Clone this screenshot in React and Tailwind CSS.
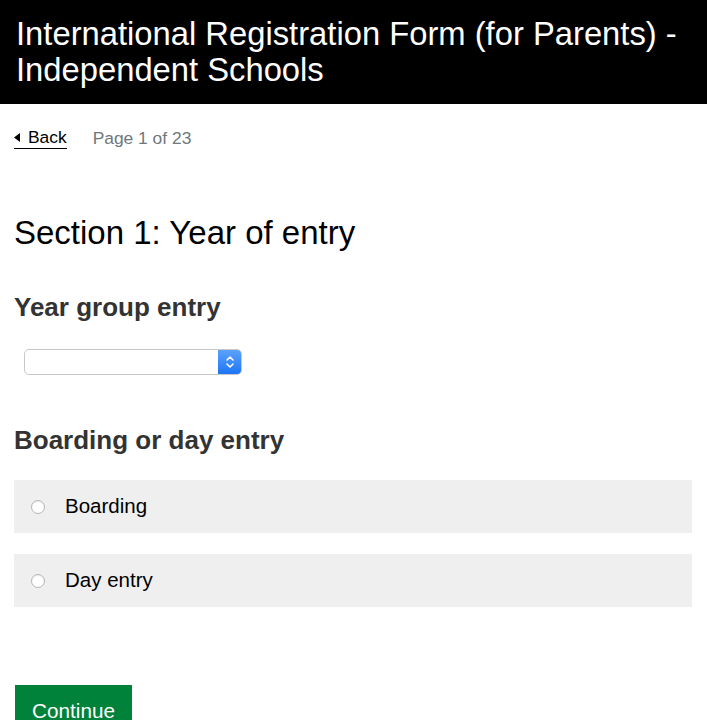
import React from "react";

function Option({ label }) {
  return (
    <label className="flex items-center h-[53px] bg-[#efefef] pl-[17px]">
      <span className="w-[14px] h-[14px] rounded-full border border-[#b5b5b5] bg-white shadow-[inset_0_1px_1px_rgba(0,0,0,0.08)]" />
      <span className="ml-[20px] text-[20.5px] text-black">{label}</span>
    </label>
  );
}

export default function App() {
  return (
    <div className="min-h-screen bg-white font-['Liberation_Sans',Arial,sans-serif]">
      <div className="bg-black text-white px-[16px] pt-[16px] h-[104px]">
        <h1 className="text-[32.75px] leading-[36px]">
          International Registration Form (for Parents) - Independent Schools
        </h1>
      </div>

      <div className="px-[14px]">
        <div className="flex items-center mt-[22px] h-[24px]">
          <a className="flex items-center text-[17.4px] text-black border-b border-black pb-[1px] leading-[20px]">
            <svg width="6" height="9" viewBox="0 0 6 9" className="mr-[8px]">
              <path d="M6 0 L0 4.5 L6 9 Z" fill="#000" />
            </svg>
            Back
          </a>
          <span className="ml-[26px] text-[17.4px] text-[#6f777b]">Page 1 of 23</span>
        </div>

        <h2 className="text-[33px] text-black mt-[64px] leading-[38px]">Section 1: Year of entry</h2>

        <h3 className="text-[26px] font-bold text-[#333] mt-[40px] leading-[30px]">Year group entry</h3>

        <div className="ml-[10px] mt-[27px] flex w-[218px] h-[26px] rounded-[5px] border border-[#c8c8c8] bg-white overflow-hidden">
          <div className="flex-1" />
          <div className="w-[23px] bg-gradient-to-b from-[#5aa1fa] to-[#1b75f5] flex items-center justify-center">
            <svg width="10" height="14" viewBox="0 0 10 14" fill="none" stroke="white" strokeWidth="1.6" strokeLinecap="round" strokeLinejoin="round">
              <path d="M2 5 L5 2 L8 5" />
              <path d="M2 9 L5 12 L8 9" />
            </svg>
          </div>
        </div>

        <h3 className="text-[26px] font-bold text-[#333] mt-[50px] leading-[30px]">Boarding or day entry</h3>

        <div className="mt-[25px] w-[678px] flex flex-col gap-[21px]">
          <Option label="Boarding" />
          <Option label="Day entry" />
        </div>

        <button className="mt-[78px] ml-[1px] bg-[#00823b] text-white text-[20.7px] w-[117px] h-[50px] pt-[2px] leading-[48px]">
          Continue
        </button>
      </div>
    </div>
  );
}
